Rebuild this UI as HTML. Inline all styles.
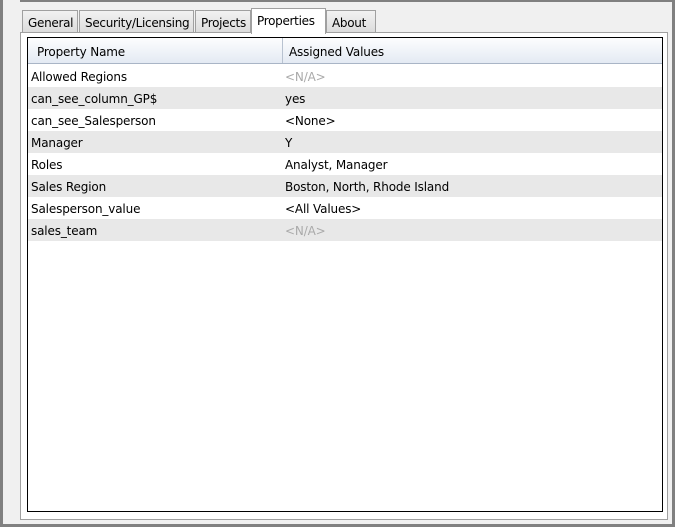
<!DOCTYPE html><html><head><style>
*{margin:0;padding:0;box-sizing:border-box}
body{width:675px;height:527px;background:#f0f0f0;position:relative;overflow:hidden;font-family:"DejaVu Sans","Liberation Sans",sans-serif;font-size:12px;color:#000;letter-spacing:-0.15px}
.a{position:absolute}
.tab{position:absolute;top:10px;height:22px;background:linear-gradient(#f2f2f2,#dcdcdc);border:1px solid #a0a0a0;border-bottom:none;padding:5px 0 0 5px;font-size:12px;letter-spacing:-0.3px}
.row{position:absolute;left:28px;width:634px;height:22px;line-height:24px}
.row span{position:absolute;left:3px}
.row b{font-weight:normal;position:absolute;left:257px}
.g{background:#e8e8e8}
.na{color:#aaa}
</style></head><body>
<div class="a" style="left:0;top:0;width:3px;height:527px;background:#808080"></div>
<div class="a" style="left:20px;top:0;width:655px;height:2px;background:#808080"></div>
<div class="a" style="left:672px;top:0;width:3px;height:527px;background:#808080"></div>
<div class="a" style="left:0;top:524px;width:675px;height:3px;background:#808080"></div>
<div class="a" style="left:20px;top:32px;width:648px;height:488px;border:1px solid #a0a0a0;background:#fff"></div>
<div class="tab" style="left:22px;width:56px">General</div>
<div class="tab" style="left:79px;width:115px">Security/Licensing</div>
<div class="tab" style="left:195px;width:56px">Projects</div>
<div class="tab" style="left:251px;top:8px;height:26px;width:75px;background:#fff;padding-top:5px">Properties</div>
<div class="tab" style="left:326px;width:50px">About</div>
<div class="a" style="left:27px;top:37px;width:636px;height:475px;border:1px solid #000;background:#fff"></div>
<div class="a" style="left:28px;top:38px;width:634px;height:26px;background:linear-gradient(#fdfdfe,#e4eaf3);border-bottom:1px solid #a9b5c6;line-height:28px">
<span class="a" style="left:9px">Property Name</span>
<div class="a" style="left:254px;top:0;width:1px;height:25px;background:#b8c2d0"></div>
<span class="a" style="left:261px">Assigned Values</span></div>
<div class="row" style="top:65px"><span>Allowed Regions</span><b class="na">&lt;N/A&gt;</b></div>
<div class="row g" style="top:87px"><span>can_see_column_GP$</span><b>yes</b></div>
<div class="row" style="top:109px"><span>can_see_Salesperson</span><b>&lt;None&gt;</b></div>
<div class="row g" style="top:131px"><span>Manager</span><b>Y</b></div>
<div class="row" style="top:153px"><span>Roles</span><b>Analyst, Manager</b></div>
<div class="row g" style="top:175px"><span>Sales Region</span><b>Boston, North, Rhode Island</b></div>
<div class="row" style="top:197px"><span>Salesperson_value</span><b>&lt;All Values&gt;</b></div>
<div class="row g" style="top:219px"><span>sales_team</span><b class="na">&lt;N/A&gt;</b></div>
</body></html>
